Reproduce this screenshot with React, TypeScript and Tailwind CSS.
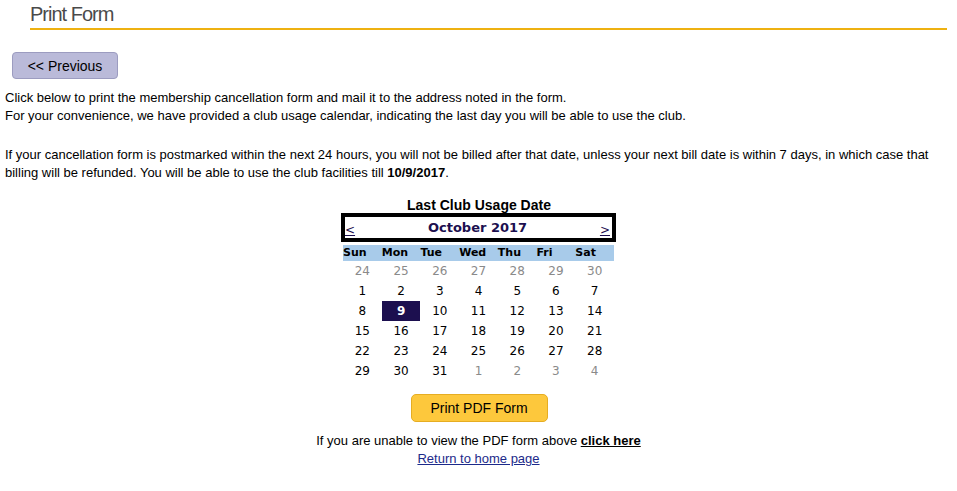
import React from "react";

const weeks: { d: number; other?: boolean; sel?: boolean }[][] = [
  [24, 25, 26, 27, 28, 29, 30].map((d) => ({ d, other: true })),
  [1, 2, 3, 4, 5, 6, 7].map((d) => ({ d })),
  [8, 9, 10, 11, 12, 13, 14].map((d) => ({ d, sel: d === 9 })),
  [15, 16, 17, 18, 19, 20, 21].map((d) => ({ d })),
  [22, 23, 24, 25, 26, 27, 28].map((d) => ({ d })),
  [
    { d: 29 },
    { d: 30 },
    { d: 31 },
    { d: 1, other: true },
    { d: 2, other: true },
    { d: 3, other: true },
    { d: 4, other: true },
  ],
];

const days = ["Sun", "Mon", "Tue", "Wed", "Thu", "Fri", "Sat"];

export default function App() {
  return (
    <div className="w-[957px] h-[491px] bg-white text-black font-['Liberation_Sans',Arial,sans-serif] text-[13px] leading-[18px] overflow-hidden">
      <div className="ml-[30px] mr-[10px] h-[30px] border-b-2 border-[#eeb111]">
        <h1 className="text-[20px] leading-[24px] tracking-[-1px] text-[#4a4a4a] pt-[2px]">Print Form</h1>
      </div>

      <div className="pl-[12px] pt-[22px]">
        <button className="w-[106px] h-[27px] bg-[#babad9] border border-[#9c9cc0] rounded-[4px] text-[14px] leading-[24px] text-black font-['Liberation_Sans',Arial,sans-serif]">
          &lt;&lt; Previous
        </button>
      </div>

      <div className="pl-[5px] pt-[10px]">
        <p>
          Click below to print the membership cancellation form and mail it to the address noted in the form.
          <br />
          For your convenience, we have provided a club usage calendar, indicating the last day you will be able to use the club.
        </p>
        <p className="mt-[21px] pr-[20px]">
          If your cancellation form is postmarked within the next 24 hours, you will not be billed after that date, unless your next bill date is within 7 days, in which case that billing will be refunded. You will be able to use the club facilities till <b>10/9/2017</b>.
        </p>
      </div>

      <div className="flex flex-col items-center mt-[15px]">
        <div className="font-bold text-[14px] leading-[16px] pl-[1px]">Last Club Usage Date</div>
        <div className="w-[271px] font-['DejaVu_Sans',Verdana,sans-serif]">
          <div className="-mx-[2px] h-[29px] border-4 border-black flex items-center justify-between px-0 text-[#1c0f4f]">
            <a href="#" className="underline text-[12px] leading-[14px] mt-[5px]">&lt;</a>
            <span className="font-bold text-[13px] leading-[16px]">October 2017</span>
            <a href="#" className="underline text-[12px] leading-[14px] mt-[5px] mr-[2px]">&gt;</a>
          </div>
          <div className="mt-[3px] grid grid-cols-7 bg-[#a8cbea] h-[16px]">
            {days.map((d) => (
              <div key={d} className="text-[11px] font-bold leading-[16px] text-left">
                {d}
              </div>
            ))}
          </div>
          {weeks.map((w, i) => (
            <div key={i} className="grid grid-cols-7 h-[20px]">
              {w.map((c, j) => (
                <div key={j} className="flex items-center justify-center">
                  <span
                    className={
                      c.sel
                        ? "w-[38px] h-[20px] flex items-center justify-center bg-[#1c0f4f] text-white font-bold text-[12px]"
                        : c.other
                        ? "text-[12px] text-[#8a8a8a]"
                        : "text-[12px] text-black"
                    }
                  >
                    {c.d}
                  </span>
                </div>
              ))}
            </div>
          ))}
        </div>

        <button className="mt-[13px] w-[137px] h-[28px] bg-[#fdc83c] border border-[#e6ad22] rounded-[5px] text-[14px] text-black ml-[1px]">
          Print PDF Form
        </button>

        <div className="mt-[10px] text-center">
          If you are unable to view the PDF form above{" "}
          <a href="#" className="font-bold underline text-black">click here</a>
        </div>
        <a href="#" className="underline text-[#1c2a8a] leading-[18px]">Return to home page</a>
      </div>
    </div>
  );
}
